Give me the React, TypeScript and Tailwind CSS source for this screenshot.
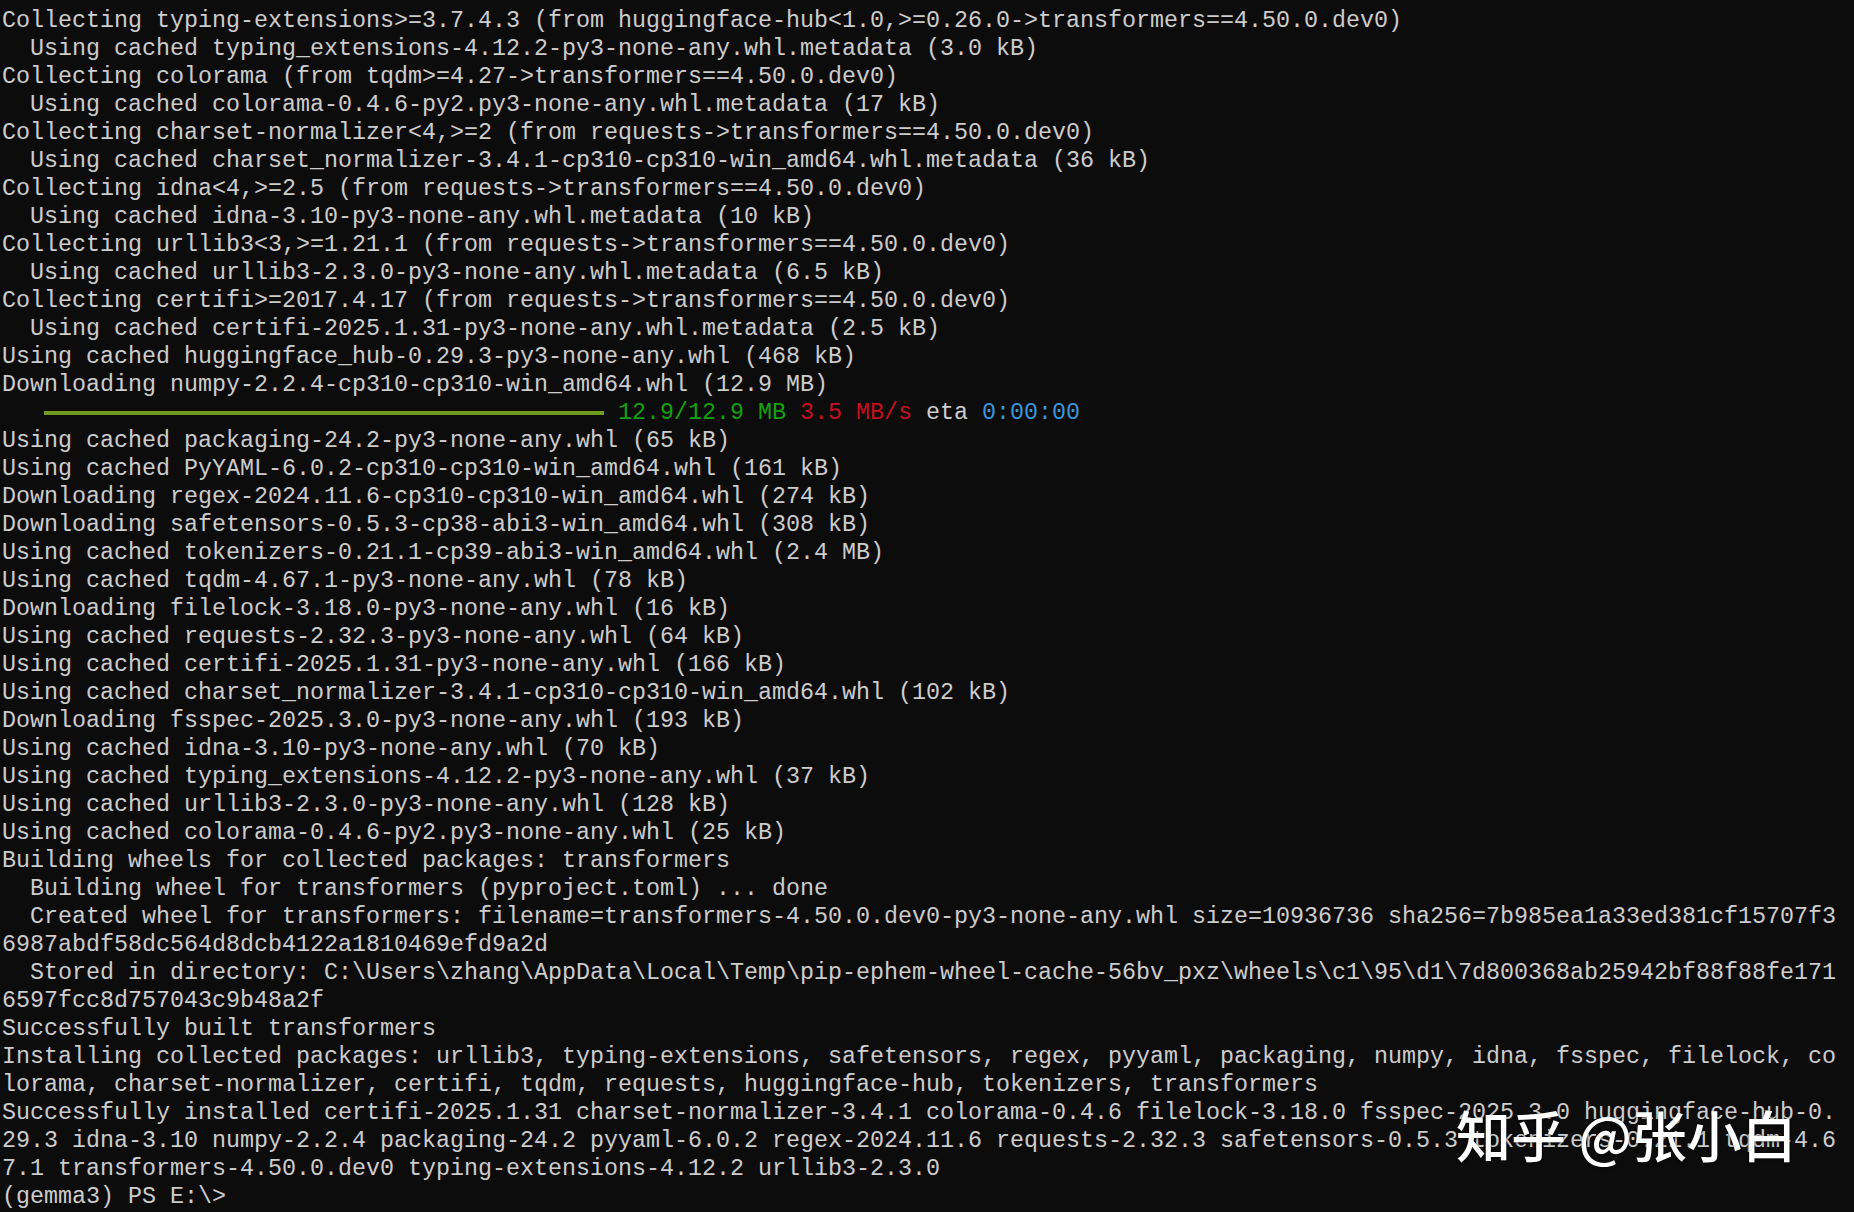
const lines: string[] = [
  "Collecting typing-extensions>=3.7.4.3 (from huggingface-hub<1.0,>=0.26.0->transformers==4.50.0.dev0)",
  "  Using cached typing_extensions-4.12.2-py3-none-any.whl.metadata (3.0 kB)",
  "Collecting colorama (from tqdm>=4.27->transformers==4.50.0.dev0)",
  "  Using cached colorama-0.4.6-py2.py3-none-any.whl.metadata (17 kB)",
  "Collecting charset-normalizer<4,>=2 (from requests->transformers==4.50.0.dev0)",
  "  Using cached charset_normalizer-3.4.1-cp310-cp310-win_amd64.whl.metadata (36 kB)",
  "Collecting idna<4,>=2.5 (from requests->transformers==4.50.0.dev0)",
  "  Using cached idna-3.10-py3-none-any.whl.metadata (10 kB)",
  "Collecting urllib3<3,>=1.21.1 (from requests->transformers==4.50.0.dev0)",
  "  Using cached urllib3-2.3.0-py3-none-any.whl.metadata (6.5 kB)",
  "Collecting certifi>=2017.4.17 (from requests->transformers==4.50.0.dev0)",
  "  Using cached certifi-2025.1.31-py3-none-any.whl.metadata (2.5 kB)",
  "Using cached huggingface_hub-0.29.3-py3-none-any.whl (468 kB)",
  "Downloading numpy-2.2.4-cp310-cp310-win_amd64.whl (12.9 MB)",
  "@@PROGRESS@@",
  "Using cached packaging-24.2-py3-none-any.whl (65 kB)",
  "Using cached PyYAML-6.0.2-cp310-cp310-win_amd64.whl (161 kB)",
  "Downloading regex-2024.11.6-cp310-cp310-win_amd64.whl (274 kB)",
  "Downloading safetensors-0.5.3-cp38-abi3-win_amd64.whl (308 kB)",
  "Using cached tokenizers-0.21.1-cp39-abi3-win_amd64.whl (2.4 MB)",
  "Using cached tqdm-4.67.1-py3-none-any.whl (78 kB)",
  "Downloading filelock-3.18.0-py3-none-any.whl (16 kB)",
  "Using cached requests-2.32.3-py3-none-any.whl (64 kB)",
  "Using cached certifi-2025.1.31-py3-none-any.whl (166 kB)",
  "Using cached charset_normalizer-3.4.1-cp310-cp310-win_amd64.whl (102 kB)",
  "Downloading fsspec-2025.3.0-py3-none-any.whl (193 kB)",
  "Using cached idna-3.10-py3-none-any.whl (70 kB)",
  "Using cached typing_extensions-4.12.2-py3-none-any.whl (37 kB)",
  "Using cached urllib3-2.3.0-py3-none-any.whl (128 kB)",
  "Using cached colorama-0.4.6-py2.py3-none-any.whl (25 kB)",
  "Building wheels for collected packages: transformers",
  "  Building wheel for transformers (pyproject.toml) ... done",
  "  Created wheel for transformers: filename=transformers-4.50.0.dev0-py3-none-any.whl size=10936736 sha256=7b985ea1a33ed381cf15707f3",
  "6987abdf58dc564d8dcb4122a1810469efd9a2d",
  "  Stored in directory: C:\\Users\\zhang\\AppData\\Local\\Temp\\pip-ephem-wheel-cache-56bv_pxz\\wheels\\c1\\95\\d1\\7d800368ab25942bf88f88fe171",
  "6597fcc8d757043c9b48a2f",
  "Successfully built transformers",
  "Installing collected packages: urllib3, typing-extensions, safetensors, regex, pyyaml, packaging, numpy, idna, fsspec, filelock, co",
  "lorama, charset-normalizer, certifi, tqdm, requests, huggingface-hub, tokenizers, transformers",
  "Successfully installed certifi-2025.1.31 charset-normalizer-3.4.1 colorama-0.4.6 filelock-3.18.0 fsspec-2025.3.0 huggingface-hub-0.",
  "29.3 idna-3.10 numpy-2.2.4 packaging-24.2 pyyaml-6.0.2 regex-2024.11.6 requests-2.32.3 safetensors-0.5.3 tokenizers-0.21.1 tqdm-4.6",
  "7.1 transformers-4.50.0.dev0 typing-extensions-4.12.2 urllib3-2.3.0",
  "(gemma3) PS E:\\>",
];

const ProgressLine = () => (
  <div className="h-[28px] whitespace-pre flex items-center">
    <span>{"   "}</span>
    <span className="inline-block w-[560px] h-[4px] bg-[#729c1f]" />
    <span>{" "}</span>
    <span className="text-[#13a10e]">12.9/12.9 MB</span>
    <span>{" "}</span>
    <span className="text-[#c50f1f]">3.5 MB/s</span>
    <span>{" eta "}</span>
    <span className="text-[#3a96dd]">0:00:00</span>
  </div>
);

export default function App() {
  return (
    <div className="relative min-h-screen w-full overflow-hidden bg-[#0c0c0c] pt-[7px] pl-[2px] text-[#cccccc] font-['Liberation_Mono',monospace] text-[23.33px] leading-[28px]">
      {lines.map((line, i) =>
        line === "@@PROGRESS@@" ? (
          <ProgressLine key={i} />
        ) : (
          <div key={i} className="h-[28px] whitespace-pre">
            {line}
          </div>
        )
      )}

      {/* watermark */}
      <div className="absolute left-[1456px] top-[1098px] whitespace-pre text-white font-['Noto_Sans_CJK_SC',sans-serif] font-medium text-[55px] leading-[70px] [text-shadow:0_1px_3px_rgba(0,0,0,0.6)]">
        知乎 @张小白
      </div>
    </div>
  );
}
